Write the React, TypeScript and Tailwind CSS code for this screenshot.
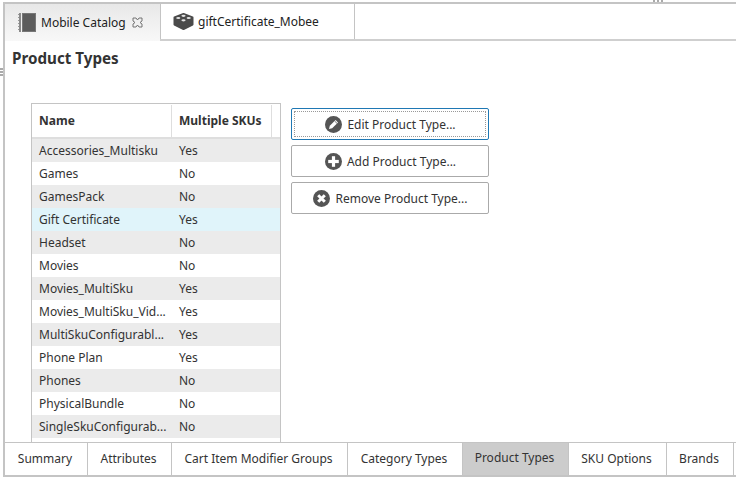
import React from 'react';

const rows = [
  { name: 'Accessories_Multisku', multi: 'Yes', bg: 'bg-[#ebebeb]' },
  { name: 'Games', multi: 'No', bg: 'bg-white' },
  { name: 'GamesPack', multi: 'No', bg: 'bg-[#ebebeb]' },
  { name: 'Gift Certificate', multi: 'Yes', bg: 'bg-[#e0f4fa]' },
  { name: 'Headset', multi: 'No', bg: 'bg-[#ebebeb]' },
  { name: 'Movies', multi: 'No', bg: 'bg-white' },
  { name: 'Movies_MultiSku', multi: 'Yes', bg: 'bg-[#ebebeb]' },
  { name: 'Movies_MultiSku_Vid...', multi: 'Yes', bg: 'bg-white' },
  { name: 'MultiSkuConfigurabl...', multi: 'Yes', bg: 'bg-[#ebebeb]' },
  { name: 'Phone Plan', multi: 'Yes', bg: 'bg-white' },
  { name: 'Phones', multi: 'No', bg: 'bg-[#ebebeb]' },
  { name: 'PhysicalBundle', multi: 'No', bg: 'bg-white' },
  { name: 'SingleSkuConfigurab...', multi: 'No', bg: 'bg-[#ebebeb]' },
];

const bottomTabs = [
  { label: 'Summary', width: 'w-[83px]' },
  { label: 'Attributes', width: 'w-[84px]' },
  { label: 'Cart Item Modifier Groups', width: 'w-[176px]' },
  { label: 'Category Types', width: 'w-[115px]' },
  { label: 'Product Types', width: 'w-[106px]', active: true },
  { label: 'SKU Options', width: 'w-[98px]' },
  { label: 'Brands', width: 'w-[67px]' },
];

const BookIcon = () => (
  <svg width="18" height="19" viewBox="0 0 18 19" className="shrink-0">
    <rect x="1" y="0" width="2" height="19" fill="#8a8a8a" />
    <path d="M0 1.500h1M0 4.500h1M0 7.500h1M0 10.500h1M0 13.500h1M0 16.500h1" stroke="#999" strokeWidth="1" />
    <rect x="4" y="0" width="14" height="19" fill="#5c5c5c" />
    <rect x="4.500" y="0.500" width="13" height="18" fill="none" stroke="#777" strokeWidth="1" />
  </svg>
);

const BrickIcon = () => (
  <svg width="21" height="17" viewBox="0 0 21 17" className="shrink-0">
    <path d="M10.500 1 L19.500 4.500 L19.500 11.500 L10.500 16 L1.500 11.500 L1.500 4.500 Z" fill="#4a4a4a" stroke="#4a4a4a" strokeWidth="2" strokeLinejoin="round" />
    <ellipse cx="10.500" cy="2.800" rx="2.100" ry="1.100" fill="#e4e4e4" />
    <ellipse cx="5.300" cy="5" rx="2.100" ry="1.100" fill="#e4e4e4" />
    <ellipse cx="15.700" cy="5" rx="2.100" ry="1.100" fill="#e4e4e4" />
    <ellipse cx="10.500" cy="7.300" rx="2.100" ry="1.100" fill="#e4e4e4" />
  </svg>
);

const PencilIcon = () => (
  <svg width="17" height="17" viewBox="0 0 17 17" className="-mt-[2px] shrink-0">
    <circle cx="8.500" cy="8.500" r="8.500" fill="#555" />
    <path d="M4 13 L4.800 9.800 L10.600 4 L13 6.400 L7.200 12.200 Z" fill="#fff" />
    <path d="M9.600 5 L12 7.400" stroke="#555" strokeWidth="0.800" />
  </svg>
);

const PlusIcon = () => (
  <svg width="17" height="17" viewBox="0 0 17 17" className="-mt-[2px] shrink-0">
    <circle cx="8.500" cy="8.500" r="8.500" fill="#555" />
    <rect x="3.200" y="6.900" width="10.600" height="3.200" fill="#fff" />
    <rect x="6.900" y="3.200" width="3.200" height="10.600" fill="#fff" />
  </svg>
);

const RemoveIcon = () => (
  <svg width="17" height="17" viewBox="0 0 17 17" className="-mt-[2px] shrink-0">
    <circle cx="8.500" cy="8.500" r="8.500" fill="#555" />
    <path d="M5.200 5.200 L11.800 11.800 M11.800 5.200 L5.200 11.800" stroke="#fff" strokeWidth="3" />
  </svg>
);

const CloseIcon = () => (
  <svg width="11" height="11" viewBox="0 0 11 11" className="shrink-0">
    <path d="M1 1 L4 1 L5.500 3 L7 1 L10 1 L10 4 L8 5.500 L10 7 L10 10 L7 10 L5.500 8 L4 10 L1 10 L1 7 L3 5.500 L1 4 Z" fill="none" stroke="#666" strokeWidth="0.900" />
  </svg>
);

const ActionButton = ({ icon, label, focused }: { icon: React.ReactNode; label: string; focused?: boolean }) => (
  <button
    className={
      focused
        ? 'h-[32px] w-[198px] rounded-[2px] border border-[#1f78b4] bg-white p-[2px]'
        : 'h-[32px] w-[198px] rounded-[2px] border border-[#aaaaaa] bg-white p-[2px]'
    }
  >
    <span
      className={
        focused
          ? 'flex h-full items-center justify-center gap-[5px] border border-dotted border-[#999] pt-[2px] pl-[1px]'
          : 'flex h-full items-center justify-center gap-[5px] border border-transparent pt-[2px] pl-[1px]'
      }
    >
      {icon}
      <span>{label}</span>
    </span>
  </button>
);

export default function App() {
  return (
    <div className="relative flex h-[479px] w-[736px] flex-col overflow-hidden bg-white pt-[2px] pl-[3px] pb-[2px] font-['Noto_Sans',sans-serif] text-[12px] text-[#333]">
      {/* grips */}
      <div className="absolute top-0 left-[653px] flex gap-[2px]">
        <div className="h-[2px] w-[2px] bg-[#aaa]" />
        <div className="h-[2px] w-[2px] bg-[#aaa]" />
        <div className="h-[2px] w-[2px] bg-[#aaa]" />
      </div>
      <div className="absolute top-[68px] left-0 flex flex-col gap-[1px]">
        <div className="h-[2px] w-[3px] bg-[#aaa]" />
        <div className="h-[2px] w-[3px] bg-[#aaa]" />
        <div className="h-[2px] w-[3px] bg-[#aaa]" />
      </div>

      <div className="flex min-h-0 flex-1 flex-col border-t-2 border-l-2 border-[#c4c4c4]">
        {/* editor tabs */}
        <div className="flex h-[37px] shrink-0 border-b-2 border-[#cfcfcf]">
          <div className="-mb-[2px] flex w-[155px] items-center bg-gradient-to-b from-[#e8e8e8] to-[#f8f8f8] pl-[13px] text-[#222]">
            <BookIcon />
            <span className="ml-[5px]">Mobile Catalog</span>
            <span className="ml-[6px]">
              <CloseIcon />
            </span>
          </div>
          <div className="flex w-[195px] items-center gap-[4px] border-x border-[#c4c4c4] bg-white pl-[12px] text-[#222]">
            <BrickIcon />
            <span>giftCertificate_Mobee</span>
          </div>
        </div>

        {/* page */}
        <div className="flex min-h-0 flex-1 flex-col overflow-hidden">
          <h1 className="mt-[6px] ml-[7px] text-[15.2px] leading-[22px] font-bold text-[#333]">Product Types</h1>
          <div className="mt-[34px] ml-[26px] flex min-h-0 flex-1 items-start gap-[10px]">
            <div className="h-full w-[250px] overflow-hidden border border-b-0 border-[#c4c4c4]">
              <div className="flex h-[35px] border-b-2 border-[#dedede] pt-[1px] font-bold">
                <div className="flex w-[140px] items-center border-r border-[#dedede] pl-[7px]">Name</div>
                <div className="flex w-[100px] items-center border-r border-[#dedede] pl-[7px]">Multiple SKUs</div>
              </div>
              {rows.map((row) => (
                <div key={row.name} className={`flex h-[23px] items-center ${row.bg}`}>
                  <div className="w-[140px] pl-[7px] whitespace-nowrap">{row.name}</div>
                  <div className="pl-[7px]">{row.multi}</div>
                </div>
              ))}
            </div>
            <div className="mt-[5px] flex flex-col gap-[5px]">
              <ActionButton icon={<PencilIcon />} label="Edit Product Type..." focused />
              <ActionButton icon={<PlusIcon />} label="Add Product Type..." />
              <ActionButton icon={<RemoveIcon />} label="Remove Product Type..." />
            </div>
          </div>
        </div>

        {/* bottom tabs */}
        <div className="flex h-[35px] shrink-0 border-t border-b-2 border-t-[#c4c4c4] border-b-[#c4c4c4]">
          {bottomTabs.map((tab) => (
            <div
              key={tab.label}
              className={
                tab.active
                  ? `flex ${tab.width} shrink-0 items-center justify-center border-r border-[#c4c4c4] bg-[#cccccc] pr-[2px] pb-[2px]`
                  : `flex ${tab.width} shrink-0 items-center justify-center border-r border-[#c4c4c4] bg-white pr-[2px]`
              }
            >
              {tab.label}
            </div>
          ))}
        </div>
      </div>
    </div>
  );
}
